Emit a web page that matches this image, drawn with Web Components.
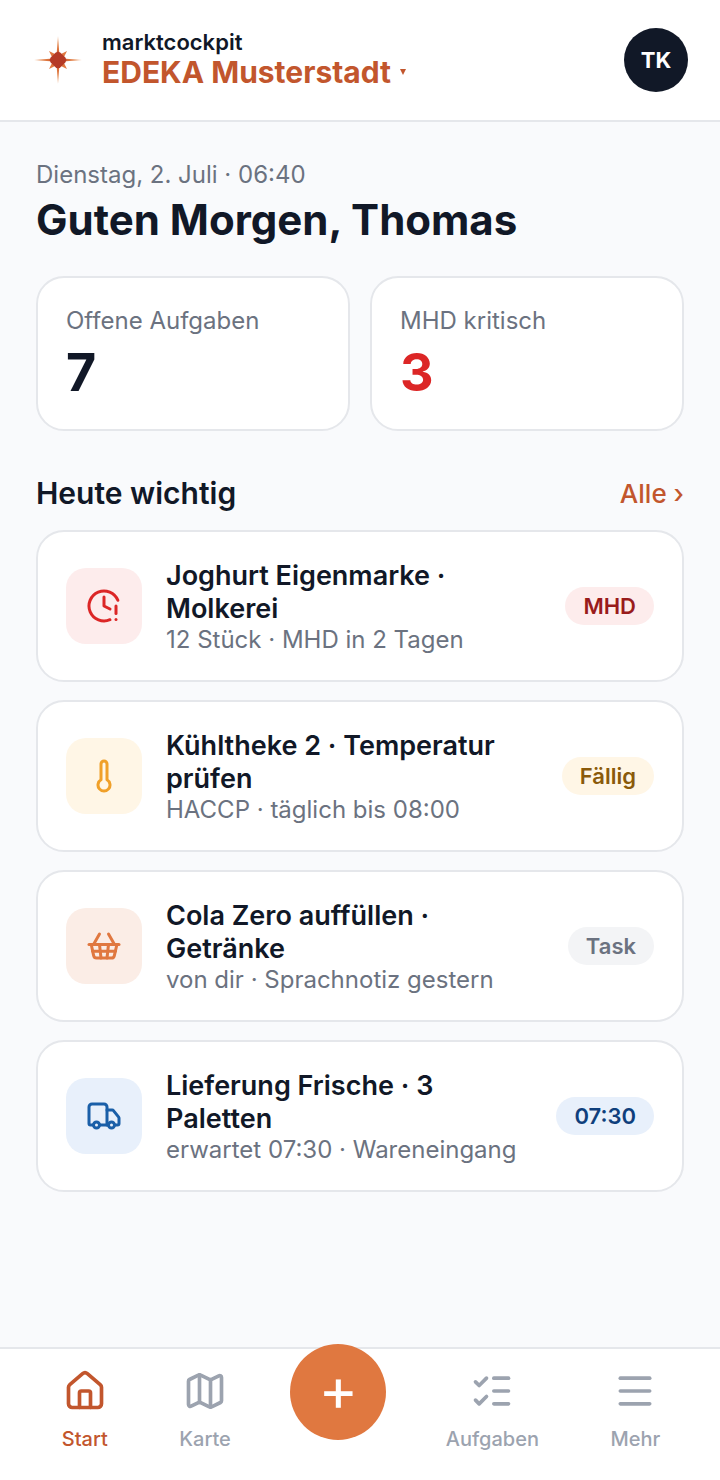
<!DOCTYPE html>
<html lang="de">
<head>
<meta charset="utf-8">
<meta name="viewport" content="width=device-width, initial-scale=1">
<title>marktcockpit</title>
<style>
    :root {
        --ink: #111827;
        --muted: #6b7280;
        --faint: #9ca3af;
        --line: #e5e7eb;
        --bg: #f9fafc;
        --brand: #c2562d;
        --accent: #e07840;
    }
    body {
        margin: 0;
        background: var(--bg);
        color: var(--ink);
        font-family: Inter, "Liberation Sans", sans-serif;
    }
</style>
</head>
<body>
<market-app>
    <app-header slot="header" brand="marktcockpit" market="EDEKA Musterstadt" initials="TK"></app-header>

    <day-greeting date="Dienstag, 2. Juli · 06:40">Guten Morgen, Thomas</day-greeting>

    <stat-grid>
        <stat-card label="Offene Aufgaben">7</stat-card>
        <stat-card label="MHD kritisch" tone="critical">3</stat-card>
    </stat-grid>

    <task-section heading="Heute wichtig" more="Alle ›">
        <task-card tone="red" icon="clock" badge="MHD">
            Joghurt Eigenmarke · Molkerei
            <span slot="meta">12 Stück · MHD in 2 Tagen</span>
        </task-card>
        <task-card tone="amber" icon="thermometer" badge="Fällig">
            Kühltheke 2 · Temperatur prüfen
            <span slot="meta">HACCP · täglich bis 08:00</span>
        </task-card>
        <task-card tone="orange" icon="basket" badge="Task">
            Cola Zero auffüllen · Getränke
            <span slot="meta">von dir · Sprachnotiz gestern</span>
        </task-card>
        <task-card tone="blue" icon="truck" badge="07:30">
            Lieferung Frische · 3 Paletten
            <span slot="meta">erwartet 07:30 · Wareneingang</span>
        </task-card>
    </task-section>

    <tab-bar slot="footer">
        <tab-item icon="home" active>Start</tab-item>
        <tab-item icon="map">Karte</tab-item>
        <add-button></add-button>
        <tab-item icon="list">Aufgaben</tab-item>
        <tab-item icon="menu">Mehr</tab-item>
    </tab-bar>
</market-app>

<script>
const ICONS = {
    clock: '<path d="M12 6v6l4 2"/><path d="M20 12v5"/><path d="M20 21h.01"/><path d="M21.25 8.2A10 10 0 1 0 16 21.16"/>',
    thermometer: '<path d="M14 4v10.54a4 4 0 1 1-4 0V4a2 2 0 0 1 4 0Z"/>',
    basket: '<path d="m15 11-1 9"/><path d="m19 11-4-7"/><path d="M2 11h20"/><path d="m3.5 11 1.6 7.4a2 2 0 0 0 2 1.6h9.8a2 2 0 0 0 2-1.6l1.7-7.4"/><path d="M4.5 15.5h15"/><path d="m5 11 4-7"/><path d="m9 11 1 9"/>',
    truck: '<path d="M14 18V6a2 2 0 0 0-2-2H4a2 2 0 0 0-2 2v11a1 1 0 0 0 1 1h2"/><path d="M15 18H9"/><path d="M19 18h2a1 1 0 0 0 1-1v-3.65a1 1 0 0 0-.22-.624l-3.48-4.35A1 1 0 0 0 17.52 8H14"/><circle cx="17" cy="18" r="2"/><circle cx="7" cy="18" r="2"/>',
    home: '<path d="M15 21v-8a1 1 0 0 0-1-1h-4a1 1 0 0 0-1 1v8"/><path d="M3 10a2 2 0 0 1 .709-1.528l7-5.999a2 2 0 0 1 2.582 0l7 5.999A2 2 0 0 1 21 10v9a2 2 0 0 1-2 2H5a2 2 0 0 1-2-2z"/>',
    map: '<path d="M14.106 5.553a2 2 0 0 0 1.788 0l3.659-1.83A1 1 0 0 1 21 4.619v12.764a1 1 0 0 1-.553.894l-4.553 2.277a2 2 0 0 1-1.788 0l-4.212-2.106a2 2 0 0 0-1.788 0l-3.659 1.83A1 1 0 0 1 3 19.381V6.618a1 1 0 0 1 .553-.894l4.553-2.277a2 2 0 0 1 1.788 0z"/><path d="M15 5.764v15"/><path d="M9 3.236v15"/>',
    list: '<path d="M13 5h8"/><path d="M13 12h8"/><path d="M13 19h8"/><path d="m3 17 2 2 4-4"/><path d="m3 7 2 2 4-4"/>',
    menu: '<path d="M4 5h16"/><path d="M4 12h16"/><path d="M4 19h16"/>'
};

function icon(name, size) {
    return `<svg width="${size}" height="${size}" viewBox="0 0 24 24" fill="none" stroke="currentColor" stroke-width="2" stroke-linecap="round" stroke-linejoin="round" aria-hidden="true">${ICONS[name]}</svg>`;
}

// every component renders once, from its attributes
class BaseElement extends HTMLElement {
    constructor() {
        super();
        this.attachShadow({ mode: "open" });
    }

    connectedCallback() {
        this.shadowRoot.innerHTML = this.render();
    }

    attr(name) {
        return this.getAttribute(name) || "";
    }
}

class MarketApp extends BaseElement {
    render() {
        return `
            <style>
                :host { display: flex; flex-direction: column; min-height: 100vh; }
                main {
                    flex: 1;
                    display: flex;
                    flex-direction: column;
                    padding: 36px;
                }
            </style>
            <slot name="header"></slot>
            <main><slot></slot></main>
            <slot name="footer"></slot>
        `;
    }
}

class AppHeader extends BaseElement {
    render() {
        return `
            <style>
                :host { display: block; background: #fff; border-bottom: 2px solid var(--line); }
                header {
                    display: flex;
                    align-items: center;
                    gap: 18px;
                    padding: 28px 32px;
                }
                .logo { display: block; }
                .names {
                    flex: 1;
                    display: flex;
                    flex-direction: column;
                    align-items: flex-start;
                    padding-bottom: 4px;
                }
                .brand { font-size: 22px; line-height: 28px; font-weight: 600; }
                .market {
                    display: flex;
                    align-items: center;
                    gap: 8px;
                    padding: 0;
                    border: 0;
                    background: none;
                    color: var(--brand);
                    font: 700 30px/32px Inter, sans-serif;
                    cursor: pointer;
                }
                .avatar {
                    width: 64px;
                    height: 64px;
                    padding: 0;
                    border: 0;
                    border-radius: 50%;
                    background: var(--ink);
                    color: #fff;
                    font: 700 22px/28px Inter, sans-serif;
                    cursor: pointer;
                }
            </style>
            <header>
                <svg class="logo" width="52" height="52" viewBox="0 0 52 52" aria-hidden="true">
                    <defs>
                        <radialGradient id="ray" gradientUnits="userSpaceOnUse" cx="26" cy="26" r="24">
                            <stop offset="0.3" stop-color="#d96a35"/>
                            <stop offset="0.75" stop-color="#e58a50"/>
                            <stop offset="1" stop-color="#f0b48c"/>
                        </radialGradient>
                    </defs>
                    <path fill="url(#ray)" d="M26 2 27.7 24.3 50 26 27.7 27.7 26 50 24.3 27.7 2 26 24.3 24.3Z"/>
                    <path fill="#e07840" d="M17 17 26 21.5 35 17 30.5 26 35 35 26 30.5 17 35 21.5 26Z"/>
                    <path fill="#b53a26" d="M26 17.5 28.5 18.7 33.3 23.5 34.5 26 33.3 28.5 28.5 33.3 26 34.5 23.5 33.3 18.7 28.5 17.5 26 18.7 23.5 23.5 18.7Z"/>
                </svg>
                <div class="names">
                    <span class="brand">${this.attr("brand")}</span>
                    <button class="market" type="button">
                        ${this.attr("market")}
                        <svg width="8" height="8" viewBox="0 0 8 8" aria-hidden="true"><path fill="currentColor" d="M1 1h6L4 7Z"/></svg>
                    </button>
                </div>
                <button class="avatar" type="button">${this.attr("initials")}</button>
            </header>
        `;
    }
}

class DayGreeting extends BaseElement {
    render() {
        return `
            <style>
                :host { display: block; margin-bottom: 28px; }
                p { margin: 0; color: var(--muted); font-size: 24px; line-height: 34px; }
                h1 { margin: 0; font-size: 42px; line-height: 56px; font-weight: 700; }
            </style>
            <p>${this.attr("date")}</p>
            <h1><slot></slot></h1>
        `;
    }
}

class StatGrid extends BaseElement {
    render() {
        return `
            <style>
                :host { display: grid; grid-template-columns: 1fr 1fr; gap: 20px; margin-bottom: 44px; }
            </style>
            <slot></slot>
        `;
    }
}

class StatCard extends BaseElement {
    render() {
        return `
            <style>
                :host {
                    display: block;
                    padding: 28px;
                    background: #fff;
                    border: 2px solid var(--line);
                    border-radius: 28px;
                }
                :host([tone="critical"]) .value { color: #dc2626; }
                .label { margin-bottom: 8px; color: var(--muted); font-size: 24px; line-height: 30px; }
                .value { font-size: 52px; line-height: 57px; font-weight: 700; }
            </style>
            <div class="label">${this.attr("label")}</div>
            <div class="value"><slot></slot></div>
        `;
    }
}

class TaskSection extends BaseElement {
    render() {
        return `
            <style>
                :host { display: block; }
                .head { display: flex; align-items: center; justify-content: space-between; margin-bottom: 18px; }
                h2 { margin: 0; font-size: 30px; line-height: 37px; font-weight: 600; }
                a { color: var(--brand); font-size: 26px; line-height: 37px; font-weight: 500; text-decoration: none; }
                .list { display: flex; flex-direction: column; gap: 18px; }
            </style>
            <div class="head">
                <h2>${this.attr("heading")}</h2>
                <a href="#aufgaben">${this.attr("more")}</a>
            </div>
            <div class="list"><slot></slot></div>
        `;
    }
}

class TaskCard extends BaseElement {
    render() {
        return `
            <style>
                :host {
                    --tint: #fdecec;
                    --icon: #dc2626;
                    --pill: #fdecec;
                    --pill-text: #991b1b;
                    display: flex;
                    align-items: center;
                    gap: 24px;
                    padding: 25px 28px;
                    background: #fff;
                    border: 2px solid var(--line);
                    border-radius: 28px;
                }
                :host([tone="amber"]) { --tint: #fff6e6; --icon: #f0a029; --pill: #fff6e6; --pill-text: #8a5a0a; }
                :host([tone="orange"]) { --tint: #fbede6; --icon: #e07840; --pill: #f3f4f6; --pill-text: #6b7280; }
                :host([tone="blue"]) { --tint: #e8f0fb; --icon: #1a5fa8; --pill: #e8f0fb; --pill-text: #0f3f7c; }
                .icon {
                    display: grid;
                    place-items: center;
                    flex: none;
                    width: 76px;
                    height: 76px;
                    border-radius: 20px;
                    background: var(--tint);
                    color: var(--icon);
                }
                .text { flex: 1; min-width: 0; padding-top: 2px; }
                .title { font-size: 27px; line-height: 33px; font-weight: 600; }
                .meta { color: var(--muted); font-size: 24px; line-height: 30px; }
                .pill {
                    flex: none;
                    padding: 4px 18px;
                    border-radius: 19px;
                    background: var(--pill);
                    color: var(--pill-text);
                    font-size: 22px;
                    line-height: 30px;
                    font-weight: 600;
                }
            </style>
            <div class="icon">${icon(this.attr("icon"), 36)}</div>
            <div class="text">
                <div class="title"><slot></slot></div>
                <div class="meta"><slot name="meta"></slot></div>
            </div>
            <span class="pill">${this.attr("badge")}</span>
        `;
    }
}

class TabBar extends BaseElement {
    render() {
        return `
            <style>
                :host { display: block; background: #fff; border-top: 2px solid var(--line); }
                nav {
                    display: flex;
                    justify-content: space-around;
                    align-items: flex-start;
                    padding: 20px 24px 27px 26px;
                }
            </style>
            <nav><slot></slot></nav>
        `;
    }
}

class TabItem extends BaseElement {
    render() {
        return `
            <style>
                :host { display: block; color: var(--faint); }
                :host([active]) { color: var(--brand); }
                a {
                    display: flex;
                    flex-direction: column;
                    align-items: center;
                    gap: 12px;
                    padding: 0 12px;
                    color: inherit;
                    font-size: 20px;
                    line-height: 28px;
                    font-weight: 500;
                    text-decoration: none;
                }
                svg { display: block; }
            </style>
            <a href="#${this.attr("icon")}">${icon(this.attr("icon"), 44)}<span><slot></slot></span></a>
        `;
    }
}

class AddButton extends BaseElement {
    render() {
        return `
            <style>
                :host { display: block; margin-top: -25px; }
                button {
                    display: block;
                    width: 96px;
                    height: 96px;
                    padding: 0 0 6px;
                    border: 0;
                    border-radius: 50%;
                    background: var(--accent);
                    color: #fff;
                    font: 400 60px/90px Inter, sans-serif;
                    cursor: pointer;
                }
            </style>
            <button type="button">+</button>
        `;
    }
}

customElements.define("market-app", MarketApp);
customElements.define("app-header", AppHeader);
customElements.define("day-greeting", DayGreeting);
customElements.define("stat-grid", StatGrid);
customElements.define("stat-card", StatCard);
customElements.define("task-section", TaskSection);
customElements.define("task-card", TaskCard);
customElements.define("tab-bar", TabBar);
customElements.define("tab-item", TabItem);
customElements.define("add-button", AddButton);
</script>
</body>
</html>
